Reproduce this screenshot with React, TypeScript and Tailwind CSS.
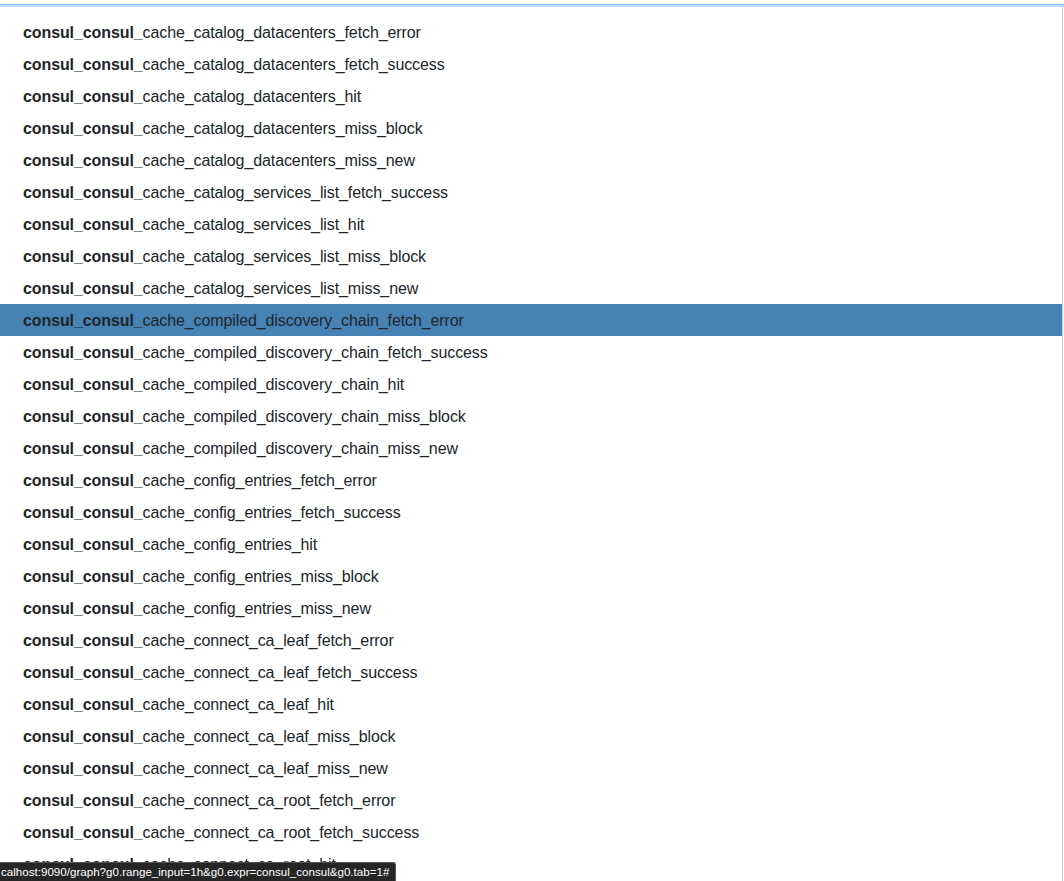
import React from 'react';

const suffixes = [
  'cache_catalog_datacenters_fetch_error',
  'cache_catalog_datacenters_fetch_success',
  'cache_catalog_datacenters_hit',
  'cache_catalog_datacenters_miss_block',
  'cache_catalog_datacenters_miss_new',
  'cache_catalog_services_list_fetch_success',
  'cache_catalog_services_list_hit',
  'cache_catalog_services_list_miss_block',
  'cache_catalog_services_list_miss_new',
  'cache_compiled_discovery_chain_fetch_error',
  'cache_compiled_discovery_chain_fetch_success',
  'cache_compiled_discovery_chain_hit',
  'cache_compiled_discovery_chain_miss_block',
  'cache_compiled_discovery_chain_miss_new',
  'cache_config_entries_fetch_error',
  'cache_config_entries_fetch_success',
  'cache_config_entries_hit',
  'cache_config_entries_miss_block',
  'cache_config_entries_miss_new',
  'cache_connect_ca_leaf_fetch_error',
  'cache_connect_ca_leaf_fetch_success',
  'cache_connect_ca_leaf_hit',
  'cache_connect_ca_leaf_miss_block',
  'cache_connect_ca_leaf_miss_new',
  'cache_connect_ca_root_fetch_error',
  'cache_connect_ca_root_fetch_success',
  'cache_connect_ca_root_hit',
  'cache_connect_ca_root_miss_block',
  'cache_connect_ca_root_miss_new',
];

const ACTIVE = 9;

export default function App() {
  return (
    <div className="relative h-screen overflow-hidden bg-white font-['Liberation_Sans',Arial,sans-serif] text-[#212529]">
      {/* bottom edge of the focused query input */}
      <div className="h-[4px] bg-white" />
      <div className="h-px bg-[#80bdff]" />
      <div className="h-[2px] bg-[#bfdeff]" />

      {/* autocomplete list */}
      <ul className="w-[1063px] border-r border-[#cfcfcf] pt-[9px]">
        {suffixes.map((s, i) => (
          <li
            key={s}
            className={`flex h-[32px] items-center pt-px pl-[23px] text-[16px] leading-none tracking-[-0.1px] ${
              i === ACTIVE ? 'bg-[#4682b4]' : ''
            }`}
          >
            <span className="font-bold">consul_consul_</span>
            <span>{s}</span>
          </li>
        ))}
      </ul>

      {/* browser link-hover status bubble */}
      <div className="absolute bottom-0 left-0 flex h-[19px] w-[396px] items-center overflow-hidden whitespace-nowrap rounded-tr-[3px] border-t border-r border-[#555] bg-[#262626] pl-px text-[11.6px] text-white">
        calhost:9090/graph?g0.range_input=1h&amp;g0.expr=consul_consul&amp;g0.tab=1#
      </div>
    </div>
  );
}
